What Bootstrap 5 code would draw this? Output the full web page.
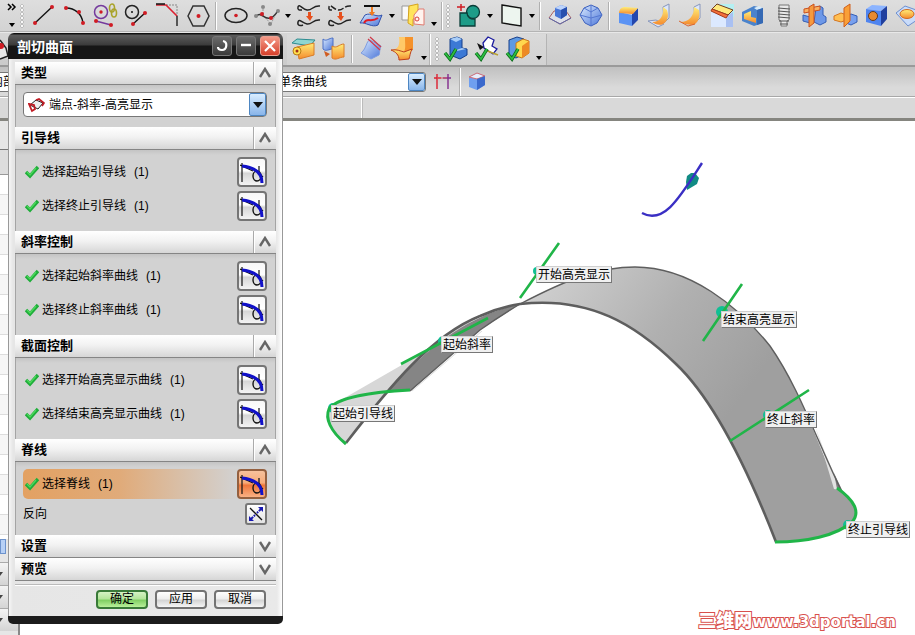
<!DOCTYPE html>
<html lang="zh-CN">
<head>
<meta charset="utf-8">
<meta name="viewport" content="width=device-width, initial-scale=1">
<title>剖切曲面</title>
<link href="https://cdn.jsdelivr.net/npm/bootstrap@5.3.0/dist/css/bootstrap.min.css" rel="stylesheet">
<style>
body{font:12px/16px "Liberation Sans","Noto Sans CJK SC",sans-serif;color:#000;background:#fff}
button{color:inherit;font:inherit}
.bar-a{height:32px;background:linear-gradient(#dedede,#d3d3d3);border-bottom:1px solid #b4b4b4}
.bar-b{height:35px;background:linear-gradient(#d6d6d6,#cbcbcb);border-top:1px solid #e8e8e8;border-bottom:2px solid #9a9a9a}
.bar-b .tools-left{width:287px}
.bar-b .tools-run{background:linear-gradient(#dadada,#d2d2d2);border-right:1px solid #b4b4b4}
.bar-b .tools-run.last{padding-right:2px;border-left:1px solid #fff}
.bar-c{height:30px;background:linear-gradient(#c0c0c0,#dadada 70%);border-bottom:1px solid #a8a8a8}
.bar-d{height:24px;background:#d9d9d9;border-top:1px solid #fff;border-bottom:3px solid #85857f}
.tool{width:31px;height:31px;border:0;background:none;padding:0;flex:none;display:grid;place-items:center}
.tool svg{width:26px;height:26px;display:block}
.more{width:11px;height:31px;border:0;background:none;padding:0;flex:none;display:grid;place-items:center}
.more.low{align-items:end;padding-bottom:5px}
.more::after{content:"";border:3px solid transparent;border-top:4px solid #000;border-bottom:0}
.rule{width:7px;height:28px;flex:none;background:linear-gradient(90deg,transparent 2px,#b0b0b0 2px,#b0b0b0 3px,#fff 3px,#fff 4px,transparent 4px)}
.grip{width:7px;height:24px;flex:none;background:radial-gradient(circle at 2px 2px,#f8f8f8 1px,#999 1px,transparent 2px) 0 0/7px 4px}
.rule.tight,.grip.tight{width:5px}
.overflow-btn{width:20px;height:31px;border:0;background:none;padding:0;flex:none}
.filter-a{width:14px;height:20px;border:1px solid #777;border-left:0;background:#fff}
.filter-a span{margin-left:-9px;line-height:18px;white-space:nowrap}
.filter-gap{width:250px}
.filter-b{width:162px;height:20px;border:1px solid #777;border-radius:3px;background:#fff;overflow:hidden}
.filter-b select,.kind select{appearance:none;border:0;background:transparent;color:#000;font-size:12px;padding:0;min-width:0;outline:0}
.filter-b select{padding-left:14px}
.drop{width:17px;flex:none;border:1px solid #4d86c2;border-radius:2px;background:linear-gradient(#d9edff,#89b5ea);display:grid;place-items:center}
.drop::after{content:"";border:5px solid transparent;border-top:6px solid #111;border-bottom:0}
.status-a{width:362px;border-right:1px solid #fff;box-shadow:1px 0 #bbb}
.nav-strip{width:20px;background:#e6e6e6;border-right:2px solid #888;flex:none}
.nav-strip .cap{height:29px;border-bottom:1px solid #777}
.nav-strip .head{height:25px;border-bottom:1px solid #999;background:#ddd}
.nav-strip .lines{height:364px;background:repeating-linear-gradient(#fff 0 19px,#ddd 19px 20px,#f6f6f6 20px 39px,#ddd 39px 40px)}
.nav-strip .slide{width:6px;height:15px;border:1px solid #6d93cd;background:#b7d0f5;padding:0}
.nav-strip .fold{height:23px;border:0;border-top:1px solid #aaa;background:linear-gradient(#f4f4f4,#d4d4d4);text-align:left;padding:0;display:block;width:100%}
.nav-strip .fold::before{content:"";display:block;width:0;border:3px solid transparent;border-top:4px solid #444;border-bottom:0;margin-left:-3px}
.stage{background:#fff;overflow:hidden}
.stage>svg{display:block;width:895px;height:514px}
.pin{position:absolute;height:17px;line-height:16px;padding:0 1px;background:#f0f0f0;border:1px solid #d0d0d0;border-right-color:#777;border-bottom-color:#777;white-space:nowrap}
.pin-1{left:516px;top:145px}.pin-2{left:421px;top:215px}.pin-3{left:311px;top:284px}
.pin-4{left:701px;top:190px}.pin-5{left:745px;top:290px}.pin-6{left:826px;top:400px}
.watermark{position:absolute;right:19px;bottom:3px;font:700 15px/20px "DejaVu Sans","Noto Sans CJK SC",sans-serif;color:#fff;-webkit-text-stroke:2px #d8504c;paint-order:stroke fill;white-space:nowrap}
.watermark b{font-size:18px}
.dlg{position:absolute;left:8px;top:33px;width:275px;background:#ececec;border-radius:6px 6px 5px 5px;border-bottom:8px solid #1c1c1c}
.dlg-title{height:26px;padding:0 3px 0 9px;background:linear-gradient(#111 1px,#5c5c5c 2px,#3b3b3b 12px,#161616 13px,#161616);border-radius:6px 6px 0 0;color:#fff;font-size:14px;font-weight:700}
.dlg-title h1{font-size:14px;font-weight:700;line-height:20px;margin:0;padding-top:2px}
.wbtn{width:20px;height:20px;padding:0;border:1px solid #777;border-radius:3px;background:linear-gradient(#6a6a6a,#3a3a3a);display:grid;place-items:center}
.wbtn.quit{background:linear-gradient(#f49a88,#d7402b);border-color:#e9a193}
.wbtn svg{width:16px;height:16px}
.dlg-main{padding:3px 6px 0 6px;border:solid #999;border-width:0 1px;background:linear-gradient(90deg,#f6f6f6,#e6e6e6 4px,#e9e9e9 268px,#fff)}
.sec-head{height:23px;width:100%;border:0;border-bottom:1px solid #858585;padding:0 0 0 6px;background:linear-gradient(#fff,#f2f2f2 45%,#d6d6d6);font-size:13px;font-weight:700;text-align:left}
.sec-head .fold-mark{width:23px;height:22px;border-left:1px solid #aaa;box-shadow:inset 1px 0 #fff;display:grid;place-items:center}
.sec-head svg{width:14px;height:12px}
.sec-body{padding:7px 9px 10px 8px;background:linear-gradient(#c4c4c4,#d2d2d2 5px);border:solid #a4a4a4;border-width:0 1px;padding-left:7px;padding-right:8px}
.kind{height:25px;border:1px solid #777;border-radius:4px;background:#fff;padding:0 0 0 4px}
.pick{height:30px;padding-left:2px}
.pick.on{background:linear-gradient(90deg,#e3a162,#e0ab7a 40%,#d2d2d2 88%);border-radius:5px}
.pick svg.tick{width:14px;height:14px;margin-right:3px;flex:none}
.pick small{font-size:12px;margin-left:8px}
.pbtn{width:30px;height:30px;padding:1px;border:2px solid #757575;border-radius:4px;background:linear-gradient(#f7f7f7,#fff 45%,#d6d6d6 55%,#f4f4f4)}
.pbtn svg{width:24px;height:24px;display:block}
.on .pbtn{background:linear-gradient(#f6c19c,#f7ac7a 45%,#f0763a 55%,#f9b184);border-color:#94603f}
.flip{width:22px;height:22px;padding:0;border:2px solid #777;border-radius:3px;background:linear-gradient(#fff,#e2e2e2)}
.flip svg{width:18px;height:18px;display:block}
.dlg-foot{margin-top:3px;padding:5px 10px 7px 0;border-top:1px solid #bbb;box-shadow:inset 0 1px #fff;gap:7px}
.act{width:52px;height:19px;padding:0;line-height:15px;border:2px solid #737373;border-radius:4px;background:linear-gradient(#fff,#eee 45%,#d4d4d4 55%,#f6f6f6)}
.act.go{border-color:#397a38;background:linear-gradient(#d5f2c4,#b4e59b 45%,#80cf63 55%,#b9f09a)}
</style>
<script src="https://cdn.jsdelivr.net/npm/bootstrap@5.3.0/dist/js/bootstrap.bundle.min.js"></script>
</head>
<body class="m-0 overflow-hidden">
<svg width="0" height="0" class="position-absolute" aria-hidden="true">
  <defs>
    <linearGradient id="gb" x2="1" y2="1"><stop stop-color="#dcecff"/><stop offset="1" stop-color="#4a74d8"/></linearGradient>
    <linearGradient id="go" x2="0" y2="1"><stop stop-color="#ffee78"/><stop offset="1" stop-color="#f58b2d"/></linearGradient>
  </defs>
  <symbol id="tangent" viewBox="0 0 24 24"><path d="M2 3v19M0 5l13 6M19 6v9M15 10l8 7" fill="none" stroke="#111" stroke-width="1.2"/><ellipse cx="17" cy="16" rx="4" ry="5" fill="none" stroke="#111" stroke-width="1.4"/><path d="M2 6C12 7 22 11 22 23" fill="none" stroke="#1111c8" stroke-width="3"/></symbol>
  <symbol id="tick" viewBox="0 0 14 14"><path d="M1 7l4 4 8-9" fill="none" stroke="#1fae3a" stroke-width="3.4"/><path d="M2 7l3 3 6-7" fill="none" stroke="#4cd95c" stroke-width="1.2"/></symbol>
  <symbol id="up" viewBox="0 0 14 12"><path d="M2 10l5-8 5 8" fill="none" stroke="#666" stroke-width="2.4"/></symbol>
  <symbol id="down" viewBox="0 0 14 12"><path d="M2 2l5 8 5-8" fill="none" stroke="#666" stroke-width="2.4"/></symbol>
  <symbol id="okmark" viewBox="0 0 26 26"><path d="M2 17l5 6 6-10" fill="none" stroke="#0a6b1a" stroke-width="3.4"/><path d="M2 17l5 6 6-10" fill="none" stroke="#2ebd42" stroke-width="1.8"/></symbol>
</svg>

<div class="position-relative vh-100 d-flex flex-column overflow-hidden">
  <div class="bar-a d-flex align-items-center flex-shrink-0 overflow-hidden" role="toolbar" aria-label="曲线与特征">
    <button class="overflow-btn" aria-label="更多"><svg width="20" height="30"><path d="M8 3l3 3-3 3M12 3l3 3-3 3" fill="none" stroke="#000" stroke-width="1.5"/><path d="M9 22h6l-3 4z"/></svg></button>
    <span class="grip"></span>
    <button class="tool" aria-label="直线"><svg viewBox="0 0 26 26"><path d="M5 20L22 4" stroke="#111" stroke-width="1.4"/><g fill="#d01c24"><circle cx="5" cy="20" r="2"/><circle cx="22" cy="4" r="2"/></g></svg></button>
    <button class="tool" aria-label="圆弧"><svg viewBox="0 0 26 26"><path d="M5 5c9 0 16 6 17 15" fill="none" stroke="#111" stroke-width="1.4"/><g fill="#d01c24"><circle cx="5" cy="5" r="2"/><circle cx="18" cy="9" r="2"/><circle cx="22" cy="20" r="2"/></g></svg></button>
    <button class="tool" aria-label="相切圆"><svg viewBox="0 0 26 26"><circle cx="9" cy="9" r="6.5" fill="none" stroke="#743a9d" stroke-width="1.5"/><path d="M4 18l15 4" stroke="#743a9d" stroke-width="1.5"/><g fill="#d01c24"><circle cx="9" cy="9" r="1.7"/><circle cx="4" cy="18" r="2"/><circle cx="19" cy="22" r="2"/></g><g fill="none" stroke="#a9a32a" stroke-width="1.6"><ellipse cx="20" cy="5" rx="2.5" ry="4"/><ellipse cx="22" cy="10" rx="2.5" ry="4"/></g></svg></button>
    <button class="tool" aria-label="圆与直线"><svg viewBox="0 0 26 26"><circle cx="9" cy="9" r="6.5" fill="none" stroke="#222" stroke-width="1.5"/><path d="M10 21L22 10" stroke="#111" stroke-width="1.4"/><g fill="#d01c24"><circle cx="10" cy="21" r="2"/><circle cx="22" cy="10" r="2"/><circle cx="9" cy="9" r="1" fill="#111"/></g></svg></button>
    <button class="tool" aria-label="倒斜角"><svg viewBox="0 0 26 26"><path d="M12 2h11v11" fill="none" stroke="#888" stroke-dasharray="2 1"/><path d="M2 2h10l11 11" fill="none" stroke="#dc2030" stroke-width="1.6"/><path d="M2 1h9M23 13v10" stroke="#111" stroke-width="1.3"/></svg></button>
    <button class="tool" aria-label="多边形"><svg viewBox="0 0 26 26"><path d="M3 13L8 3h11l5 10-5 10H8z" fill="none" stroke="#333" stroke-width="1.5"/><circle cx="13.500" cy="13" r="2" fill="#d01c24"/></svg></button>
    <span class="rule"></span>
    <button class="tool" aria-label="椭圆"><svg viewBox="0 0 26 26"><ellipse cx="13" cy="12.500" rx="11" ry="7" fill="none" stroke="#222" stroke-width="1.5"/><circle cx="13" cy="12.500" r="1.800" fill="#d01c24"/></svg></button>
    <button class="tool" aria-label="样条"><svg viewBox="0 0 26 26"><path d="M9 3l0 9 8 9 6-13" fill="none" stroke="#999" stroke-dasharray="2 1"/><path d="M2 14c4-7 8 3 14 1s5-4 8-7" fill="none" stroke="#333" stroke-width="1.4"/><g fill="#888"><circle cx="9" cy="4" r="2"/><circle cx="2" cy="13" r="2"/><circle cx="16" cy="21" r="2"/><circle cx="24" cy="8" r="2"/></g><g fill="#d01c24"><circle cx="8" cy="11" r="2"/><circle cx="17" cy="15" r="2"/></g></svg></button>
    <button class="more" aria-label="展开"></button>
    <button class="tool" aria-label="桥接曲线"><svg viewBox="0 0 26 26"><path d="M24 3c-7-1-8 5-13 4S3 0 2 4s3 3 4 3M24 17c-7-1-8 5-13 4s-8-6-9-2 3 4 5 3" fill="none" stroke="#222" stroke-width="1.5"/><path d="M12 9h3v4h2l-3 5-4-5h2z" fill="#e6501e"/></svg></button>
    <button class="tool" aria-label="连结曲线"><svg viewBox="0 0 26 26"><path d="M24 3c-7-1-8 5-13 4S3 0 2 4s3 3 4 3" fill="none" stroke="#222" stroke-width="1.5" stroke-dasharray="6 2"/><path d="M24 17c-7-1-8 5-13 4s-8-6-9-2 3 4 5 3" fill="none" stroke="#222" stroke-width="1.5"/><path d="M12 9h3v4h2l-3 5-4-5h2z" fill="#e6501e"/></svg></button>
    <button class="tool" aria-label="投影曲线"><svg viewBox="0 0 26 26"><path d="M2 20L7 12c6-3 12 3 17 0l-4 10c-6 3-12-3-18-2z" fill="url(#gb)" stroke="#3252ab"/><path d="M6 20c3-6 7 0 14-5" fill="none" stroke="#e01c24" stroke-width="2"/><path d="M6 3h16" stroke="#111" stroke-width="2"/><path d="M13 4h2v5h2l-3 4-3-4h2z" fill="#f07a1e"/></svg></button>
    <button class="more" aria-label="展开"></button>
    <button class="tool" aria-label="抽取"><svg viewBox="0 0 26 26"><path d="M2 3h7v14H2z" fill="#f9f9f9" stroke="#999"/><path d="M9 3l9-2v13l-5 2v7l-5-3z" fill="#ffe45c" stroke="#d5a41e"/><path d="M14 12l5-6h5v16l-10-1z" fill="#fff3ee" stroke="#e07a70"/><circle cx="17" cy="16" r="2" fill="none" stroke="#d9403c"/></svg></button>
    <button class="more low" aria-label="展开"></button>
    <span class="rule"></span><span class="grip"></span>
    <button class="tool" aria-label="草图"><svg viewBox="0 0 26 26"><g fill="#1d9c88" stroke="#0a3d38" stroke-width="1.300"><circle cx="17" cy="9" r="6.500"/><path d="M4 10h7c0 4 4 7 8 6v7H4z"/></g><path d="M5 1v7M1 4h8" stroke="#d01c24" stroke-width="1.500"/></svg></button>
    <button class="more" aria-label="展开"></button>
    <button class="tool" aria-label="基准平面"><svg viewBox="0 0 26 26"><path d="M4 2l19 3v18L4 20z" fill="#edf5ef" stroke="#111" stroke-width="1.400"/></svg></button>
    <button class="more" aria-label="展开"></button>
    <span class="rule"></span>
    <button class="tool" aria-label="拉伸"><svg viewBox="0 0 26 26"><path d="M2 15l5-7h12l5 7-11 6z" fill="#dfe1e8" stroke="#a86060"/><path d="M2 15l11 6 11-6" fill="none" stroke="#5c6cae"/><path d="M8 5l6-3 6 2v8l-6 4-6-3z" fill="#4876d6"/><path d="M8 5l6-3 6 2-6 3z" fill="#bcd3fb"/><path d="M14 7l6-3v8l-6 4z" fill="#274fae"/></svg></button>
    <button class="tool" aria-label="球体"><svg viewBox="0 0 26 26"><path d="M13 2l7 3 4 7-5 8-6 3-6-3-5-8 4-7z" fill="url(#gb)" stroke="#3c60bd"/><path d="M2 12l11 3 11-3M13 2v21M6 5l7 4 7-4" fill="none" stroke="#5477d1"/></svg></button>
    <span class="rule"></span>
    <button class="tool" aria-label="边倒圆"><svg viewBox="0 0 26 26"><path d="M3 9l13 3v11L3 20z" fill="#5b93f4"/><path d="M16 11l6-6v12l-6 6z" fill="#2347ae"/><path d="M3 10c0-4 3-6 6-6l13 1-5 6z" fill="url(#go)"/></svg></button>
    <button class="tool" aria-label="面倒圆"><svg viewBox="0 0 26 26"><path d="M16 4l6-3v14l-5 5zM1 18l8-1 8 4-6 3z" fill="#dce7fb" stroke="#8796bb"/><path d="M16 4l4 3c2 6 1 11-4 14-4 2-8 0-11-2 8 0 12-6 11-15z" fill="url(#go)"/></svg></button>
    <button class="tool" aria-label="软倒圆"><svg viewBox="0 0 26 26"><path d="M16 4l6-3v14l-5 5z" fill="#dce7fb" stroke="#8796bb"/><path d="M16 4l5 3c1 6 0 11-4 14-4 2-10 0-15-2 9 0 14-6 14-15z" fill="url(#go)"/><path d="M1 18l9 5 7-2" fill="none" stroke="#d9642e"/></svg></button>
    <button class="tool" aria-label="倒角"><svg viewBox="0 0 26 26"><path d="M6 1h19v13z" fill="#b4f0f2"/><path d="M2 7l15 6v11H2z" fill="#dce9ff"/><path d="M17 14l7-5v15h-7z" fill="#a9c0f2"/><path d="M8 1l16 6-5 5L3 6z" fill="#ffe97c" stroke="#6e3a20"/><path d="M3 6l16 6-2 3L2 8z" fill="#f5703c" stroke="#a43b1d"/></svg></button>
    <button class="tool" aria-label="抽壳"><svg viewBox="0 0 26 26"><path d="M2 9l12-6 9 2v15l-9 3-12-5z" fill="#4a83cc"/><path d="M14 5l5-2 4 2-6 2z" fill="#d9ecfa"/><path d="M17 7l6-2v15l-6 2z" fill="#3569b4"/><path d="M4 11l7-3v6l5 1v5L4 16z" fill="url(#go)"/></svg></button>
    <button class="tool" aria-label="螺纹"><svg viewBox="0 0 26 26"><path d="M8 2h10v15l-2 1v5h-6v-5l-2-1z" fill="#e8e8e8" stroke="#777"/><path d="M7 5l12 1M7 8l12 1M7 11l12 1M7 14l12 1M8 18h10M9 21h8" stroke="#555"/></svg></button>
    <button class="tool" aria-label="修剪体"><svg viewBox="0 0 26 26"><path d="M14 5l4-2 3 2v7l3 2v5l-6 3-6-3zM1 12l7 2v6l-7-2z" fill="#6d98e8" stroke="#345eb5"/><path d="M2 6l16-3v4L2 10z" fill="#f9b060" stroke="#ca501f"/><path d="M7 4l5-3v19l-5 4z" fill="#f69a3e" stroke="#ca501f"/></svg></button>
    <button class="tool" aria-label="拆分体"><svg viewBox="0 0 26 26"><path d="M13 13l5-2 6 2v6l-6 3-5-2z" fill="#78a0ee" stroke="#345eb5"/><path d="M1 13l7-3 6 2v5l-6 2-7-2z" fill="#ffbf52" stroke="#d5751f"/><path d="M11 5l6-4v17l-6 6z" fill="#f99f38" stroke="#cf5e1c"/></svg></button>
    <button class="tool" aria-label="孔"><svg viewBox="0 0 26 26"><path d="M2 6l6-4 15 1-6 5z" fill="#8cb4ff"/><path d="M2 6l15 2v15L2 19z" fill="#4f84ef"/><path d="M17 8l6-5v13l-6 7z" fill="#203f9e"/><ellipse cx="9" cy="13" rx="4.500" ry="4.500" fill="#e88a2f" stroke="#60391d"/></svg></button>
    <button class="tool" aria-label="凸台"><svg viewBox="0 0 26 26"><path d="M1 10l9-7 14 5-2 9-9 6z" fill="#c9dcfa" stroke="#6d8fd0"/><ellipse cx="12" cy="11" rx="7" ry="4.500" fill="url(#go)" stroke="#d26a22"/></svg></button>
  </div>

  <div class="bar-b d-flex align-items-center flex-shrink-0" role="toolbar" aria-label="曲面">
    <div class="tools-left flex-shrink-0"><svg width="20" height="28"><path d="M0 5l6 8 2 8-8 3" fill="#e8e8e8" stroke="#222" stroke-width="1.500"/><circle cx="1" cy="11" r="3" fill="#d01c24"/></svg></div>
    <div class="tools-run d-flex align-items-center">
      <button class="tool" aria-label="延伸曲面"><svg viewBox="0 0 26 26"><path d="M2 7l5-4 18 1-5 6z" fill="#8fd6d2" stroke="#2c8b90"/><path d="M7 11l17-4v12L9 23z" fill="url(#go)" stroke="#d97c28"/><circle cx="7" cy="15" r="4" fill="#ffe04f" stroke="#b77a1a"/><circle cx="7" cy="15" r="1.500" fill="#a3311c"/></svg></button>
      <button class="tool" aria-label="偏置曲面"><svg viewBox="0 0 26 26"><path d="M2 3c3 3 6-1 10-1v11c-4 0-7 3-10 0z" fill="url(#gb)" stroke="#4a6fc5"/><path d="M11 10c5 3 7-2 12-2v13c-5 0-8 4-12 1z" fill="url(#go)" stroke="#d97c28"/><path d="M3 15l6 3-4 3z" fill="#d05c20"/></svg></button>
      <span class="rule"></span>
      <button class="tool" aria-label="修剪曲面"><svg viewBox="0 0 26 26"><path d="M2 17C8 12 7 5 11 4l11 6c-2 5-1 8-2 9l-8 4z" fill="url(#gb)" stroke="#7e9de0"/><path d="M11 1l11 10M9 3l12 11" stroke="#cf3b4a" stroke-width="1.200"/></svg></button>
      <button class="tool" aria-label="圆角曲面"><svg viewBox="0 0 26 26"><path d="M10 1h13v13l-9 3c-4-5 0-9-4-16z" fill="#f5922b"/><path d="M9 1h6c0 8 1 11-1 15L2 14c7-1 8-6 7-13z" fill="#ffc968"/><path d="M1 14c6-1 9 1 13 2l8-3c-2 4-2 7-3 10l-10 1C9 19 6 16 1 14z" fill="url(#go)" stroke="#bd3f1c"/></svg></button>
      <button class="more low" aria-label="展开"></button>
    </div>
    <div class="tools-run last d-flex align-items-center">
      <span class="grip ms-1 tight"></span>
      <button class="tool" aria-label="更新模型"><svg viewBox="0 0 26 26"><path d="M7 3l7-2 5 2v9l5 1v6l-7 4-10-4z" fill="#3c79d5" stroke="#153f8b"/><path d="M7 3l7-2 5 2-6 3zM14 15l9-2-4-1-6 2z" fill="#a8cdf9"/><use href="#okmark"/></svg></button>
      <button class="tool" aria-label="更新草图"><svg viewBox="0 0 26 26"><path d="M9 7l5-6 6 3-2 6 5 3-4 5-9-6z" fill="#fff" stroke="#1b1b9e" stroke-width="1.300"/><path d="M3 7l7 4-4 3" fill="#111"/><path d="M11 14l13 5" fill="none" stroke="#b8a030" stroke-width="1.500"/><use href="#okmark"/></svg></button>
      <button class="tool" aria-label="更新体"><svg viewBox="0 0 26 26"><path d="M4 4l8-3 7 2v15l-8 4-7-3z" fill="#5f9ae2" stroke="#173f8b"/><path d="M11 7l7-4 6 2v12l-7 5-6-2z" fill="#ffd84e" stroke="#c9781c"/><path d="M17 10l7-5v12l-7 5z" fill="#ed8a24"/><use href="#okmark"/></svg></button>
      <button class="more low" aria-label="展开"></button>
    </div>
  </div>

  <div class="bar-c d-flex align-items-center flex-shrink-0">
    <div class="filter-a d-flex flex-shrink-0"><span>内部</span></div>
    <div class="filter-gap flex-shrink-0"></div>
    <div class="filter-b d-flex flex-shrink-0"><select class="flex-grow-1" aria-label="曲线规则"><option>单条曲线</option></select><span class="drop"></span></div>
    <button class="tool" aria-label="在相交处停止"><svg viewBox="0 0 26 26"><path d="M8 5v15M5 9h7" stroke="#dc2030" stroke-width="1.400"/><path d="M19 5v15M14 9h8" stroke="#832c8d" stroke-width="1.400"/><path d="M8 9h10" stroke="#d65a65"/></svg></button>
    <span class="rule tight"></span>
    <button class="tool" aria-label="着色"><svg viewBox="0 0 26 26"><path d="M4 8l8-4 8 3v9l-8 5-8-3z" fill="#6f9fef"/><path d="M4 8l8-4 8 3-8 3z" fill="#e6eefc" stroke="#cf6b75"/><path d="M12 10l8-3v9l-8 5z" fill="#3b69cc"/></svg></button>
  </div>
  <div class="bar-d d-flex flex-shrink-0"><div class="status-a"></div></div>

  <div class="d-flex flex-grow-1">
    <div class="nav-strip">
      <div class="cap"></div><div class="head"></div><div class="lines"></div>
      <div class="d-flex pb-2"><button class="slide" aria-label="滚动"></button></div>
      <button class="fold" aria-label="相关性"></button><button class="fold" aria-label="细节"></button><button class="fold" aria-label="预览面板"></button>
    </div>
    <main class="stage position-relative flex-grow-1">
      <svg viewBox="20 121 895 514" role="img" aria-label="剖切曲面模型">
        <defs><linearGradient id="sheet" gradientUnits="userSpaceOnUse" x1="550" y1="260" x2="740" y2="400"><stop stop-color="#d0d0d0"/><stop offset=".55" stop-color="#b0b0b0"/><stop offset="1" stop-color="#9f9f9f"/></linearGradient></defs>
        <path d="M334 404L440 343 480 316 440 338C405 366 372 410 346 443C330 431 323 415 334 404z" fill="#d7d7d7"/>
        <path d="M388 391C430 345 468 316 520 304L480 330 410 391z" fill="#858585"/>
        <path d="M520 304C570 278 600 267 635 267C690 267 738 306 770 346C798 386 815 436 838 489C856 501 860 513 850 523C835 535 805 541 776 542C746 465 712 398 676 364C636 325 590 296 520 304z" fill="url(#sheet)"/>
        <path d="M815 426L834 489 841 490 824 450z" fill="#e2e2e2"/><path d="M834 473l10 21-7-5z" fill="#7e7e7e"/>
        <g fill="none" stroke="#5e5e5e">
          <path d="M346 443C390 386 432 335 480 316Q500 307 520 304C590 296 636 325 676 364C712 398 746 465 776 542" stroke-width="2.600"/>
          <path d="M410 391L480 330Q500 316 520 304C570 278 600 267 635 267C690 267 738 306 770 346C798 386 815 436 841 490" stroke-width="1.400"/>
        </g>
        <path d="M412 391L482 331" stroke="#ddd"/>
        <g fill="#10bf94"><circle cx="537" cy="271" r="4"/><circle cx="443" cy="341" r="5"/><circle cx="333" cy="408" r="5"/><circle cx="722" cy="312" r="6"/><circle cx="768" cy="415" r="5"/><circle cx="848" cy="525" r="5"/></g>
        <g fill="none" stroke="#20b548" stroke-width="2.600">
          <path d="M346 444C330 431 325 418 329 409C337 398 370 392 410 390" stroke-width="3"/>
          <path d="M401 364L488 318M520 298L559 243M703 341L742 284M730 441L809 390"/>
          <path d="M837 488C854 500 861 512 852 522C836 536 806 542 775 542" stroke-width="3"/>
        </g>
        <path d="M687 176l4-3h4l4 5-2 6-10 6-1-8z" fill="#118b84"/>
        <path d="M642 213C664 225 680 197 702 163" fill="none" stroke="#3a2fc4" stroke-width="2.400"/>
      </svg>
      <span class="pin pin-1">开始高亮显示</span><span class="pin pin-2">起始斜率</span><span class="pin pin-3">起始引导线</span>
      <span class="pin pin-4">结束高亮显示</span><span class="pin pin-5">终止斜率</span><span class="pin pin-6">终止引导线</span>
      <div class="watermark"><b>三维网</b>www.3dportal.cn</div>
    </main>
  </div>

  <section class="dlg" role="dialog" aria-labelledby="dlgTitle">
    <header class="dlg-title d-flex align-items-center">
      <h1 id="dlgTitle" class="me-auto">剖切曲面</h1>
      <div class="d-flex gap-1">
        <button class="wbtn" aria-label="重置"><svg viewBox="0 0 16 16"><path d="M9 3c5 1 4 9-1 9-3 0-4-1-4-3" fill="none" stroke="#fff" stroke-width="2.200"/></svg></button>
        <button class="wbtn" aria-label="最小化"><svg viewBox="0 0 16 16"><path d="M3 7h10" stroke="#fff" stroke-width="2.400"/></svg></button>
        <button class="wbtn quit" aria-label="关闭"><svg viewBox="0 0 16 16"><path d="M3 3l10 10M13 3L3 13" stroke="#fff" stroke-width="2.200"/></svg></button>
      </div>
    </header>
    <div class="dlg-main">
      <button class="sec-head d-flex align-items-center justify-content-between">类型<span class="fold-mark"><svg><use href="#up"/></svg></span></button>
      <div class="sec-body"><div class="kind d-flex align-items-stretch">
        <svg width="17" height="23" viewBox="0 0 17 23" class="me-1 flex-shrink-0"><path d="M2 12l6-5 7 3-5 6z" fill="#eee" stroke="#222"/><path d="M1 11l5 1 1 4-3 2zM8 7l3-1 5 4-2 3" fill="none" stroke="#c01c24" stroke-width="1.800"/></svg>
        <select class="flex-grow-1" aria-label="类型"><option>端点-斜率-高亮显示</option></select><span class="drop"></span></div></div>

      <button class="sec-head d-flex align-items-center justify-content-between">引导线<span class="fold-mark"><svg><use href="#up"/></svg></span></button>
      <div class="sec-body d-grid gap-1">
        <div class="pick d-flex align-items-center"><svg class="tick"><use href="#tick"/></svg>选择起始引导线<small>(1)</small><button class="pbtn ms-auto" aria-label="选择起始引导线"><svg><use href="#tangent"/></svg></button></div>
        <div class="pick d-flex align-items-center"><svg class="tick"><use href="#tick"/></svg>选择终止引导线<small>(1)</small><button class="pbtn ms-auto" aria-label="选择终止引导线"><svg><use href="#tangent"/></svg></button></div>
      </div>

      <button class="sec-head d-flex align-items-center justify-content-between">斜率控制<span class="fold-mark"><svg><use href="#up"/></svg></span></button>
      <div class="sec-body d-grid gap-1">
        <div class="pick d-flex align-items-center"><svg class="tick"><use href="#tick"/></svg>选择起始斜率曲线<small>(1)</small><button class="pbtn ms-auto" aria-label="选择起始斜率曲线"><svg><use href="#tangent"/></svg></button></div>
        <div class="pick d-flex align-items-center"><svg class="tick"><use href="#tick"/></svg>选择终止斜率曲线<small>(1)</small><button class="pbtn ms-auto" aria-label="选择终止斜率曲线"><svg><use href="#tangent"/></svg></button></div>
      </div>

      <button class="sec-head d-flex align-items-center justify-content-between">截面控制<span class="fold-mark"><svg><use href="#up"/></svg></span></button>
      <div class="sec-body d-grid gap-1">
        <div class="pick d-flex align-items-center"><svg class="tick"><use href="#tick"/></svg>选择开始高亮显示曲线<small>(1)</small><button class="pbtn ms-auto" aria-label="选择开始高亮显示曲线"><svg><use href="#tangent"/></svg></button></div>
        <div class="pick d-flex align-items-center"><svg class="tick"><use href="#tick"/></svg>选择结束高亮显示曲线<small>(1)</small><button class="pbtn ms-auto" aria-label="选择结束高亮显示曲线"><svg><use href="#tangent"/></svg></button></div>
      </div>

      <button class="sec-head d-flex align-items-center justify-content-between">脊线<span class="fold-mark"><svg><use href="#up"/></svg></span></button>
      <div class="sec-body d-grid gap-1">
        <div class="pick on d-flex align-items-center"><svg class="tick"><use href="#tick"/></svg>选择脊线<small>(1)</small><button class="pbtn ms-auto" aria-label="选择脊线"><svg><use href="#tangent"/></svg></button></div>
        <div class="d-flex align-items-center justify-content-between">反向<button class="flip" aria-label="反向"><svg viewBox="0 0 18 18"><path d="M3 3l12 12" stroke="#111" stroke-width="1.300"/><path d="M11 2h5v5zM2 11v5h5z" fill="#1818b0"/><path d="M14 4l-4 4M4 14l4-4" stroke="#1818b0" stroke-width="2" stroke-dasharray="3 1"/></svg></button></div>
      </div>

      <button class="sec-head d-flex align-items-center justify-content-between">设置<span class="fold-mark"><svg><use href="#down"/></svg></span></button>
      <button class="sec-head d-flex align-items-center justify-content-between">预览<span class="fold-mark"><svg><use href="#down"/></svg></span></button>
      <footer class="dlg-foot d-flex justify-content-end">
        <button class="act go">确定</button><button class="act">应用</button><button class="act">取消</button>
      </footer>
    </div>
  </section>
</div>
</body>
</html>
